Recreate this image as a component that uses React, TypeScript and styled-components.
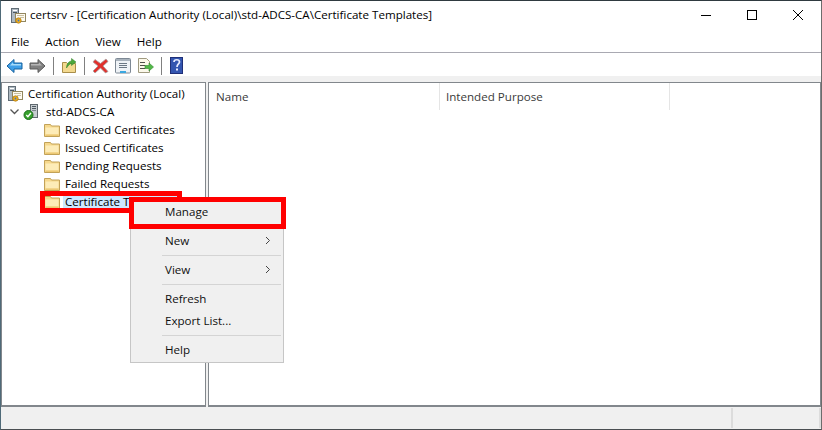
import styled, { createGlobalStyle } from 'styled-components'

const GlobalStyle = createGlobalStyle`
  html, body {
    margin: 0;
    padding: 0;
    background: #f0f0f0;
  }
  * {
    box-sizing: border-box;
  }
`

const CertIcon = () => (
  <svg width="16" height="16" viewBox="0 0 16 16">
    <rect x="1.500" y="0.500" width="7" height="14" fill="#aeb9c1" stroke="#616d76" />
    <rect x="3" y="2" width="4" height="1" fill="#fff" />
    <rect x="3" y="4" width="4" height="1" fill="#4d5860" />
    <rect x="5.500" y="5.500" width="10" height="8" fill="#fdfaf0" stroke="#93875f" />
    <rect x="7" y="7" width="7" height="1" fill="#c9bfa0" />
    <rect x="10" y="9" width="4" height="1" fill="#c9bfa0" />
    <circle cx="8.500" cy="12.500" r="2.700" fill="#eeae1c" stroke="#a87410" strokeWidth="0.700" />
    <circle cx="8.500" cy="12.500" r="0.900" fill="#3f76c8" />
  </svg>
)

const ServerIcon = () => (
  <svg width="17" height="16" viewBox="0 0 17 16">
    <rect x="7.500" y="0.500" width="7" height="13" fill="#c6ccd0" stroke="#5f686e" />
    <rect x="9" y="2" width="4" height="1" fill="#4d5860" />
    <rect x="9" y="4" width="4" height="1" fill="#4d5860" />
    <rect x="9" y="6" width="4" height="1" fill="#7d878e" />
    <circle cx="5.500" cy="11" r="4.500" fill="#36a02c" stroke="#1c6e1c" />
    <path d="M3.300 11l1.600 1.700L7.900 9" fill="none" stroke="#fff" strokeWidth="1.400" />
  </svg>
)

const FolderIcon = () => (
  <svg width="16" height="14" viewBox="0 0 16 14">
    <path d="M0.500 1.500h6l1 1.500h8v10.500h-15z" fill="#f6d88c" stroke="#c2a258" />
    <path d="M1.500 4.500h13v7h-13z" fill="#fdecb8" />
    <path d="M1.500 11.500h13v1.500h-13z" fill="#ecc874" />
  </svg>
)

const NavArrow = ({ $fill, $light, $edge, $flip }: { $fill: string; $light: string; $edge: string; $flip?: boolean }) => (
  <svg width="17" height="16" viewBox="0 0 17 16" style={$flip ? { transform: 'scaleX(-1)' } : undefined}>
    <path d="M1 8l7-6.500V5h8v6H8v3.500z" fill={$fill} stroke={$edge} strokeLinejoin="round" />
    <path d="M4 7.500l3-3V6h8v1.500z" fill={$light} />
  </svg>
)

const UpFolderIcon = () => (
  <svg width="16" height="17" viewBox="0 0 16 17">
    <path d="M1.500 5.500h4l1 1h8v9h-13z" fill="#f3d98f" stroke="#a98e4a" />
    <path d="M5.500 11C5.500 7 8 4 10.500 4V1.500L15 5l-4.500 3.500V6.500C8.500 6.500 7 9 5.500 11z" fill="#4da83c" stroke="#2f7f28" strokeWidth="0.500" />
  </svg>
)

const DeleteIcon = () => (
  <svg width="17" height="16" viewBox="0 0 17 16">
    <path d="M3 1.500l5.500 4L14 1l2 2.500L11 8l5 5.500-2.500 1.500L8.500 10 3 15 1 13l5-5-5-4z" fill="#e0302c" stroke="#a8a0a0" strokeWidth="0.800" />
  </svg>
)

const PropertiesIcon = () => (
  <svg width="16" height="16" viewBox="0 0 16 16">
    <rect x="0.500" y="0.500" width="15" height="14.500" rx="1" fill="#eef2f6" stroke="#7d8894" />
    <rect x="1" y="1" width="14" height="2" fill="#a8b2bc" />
    <rect x="4" y="5" width="8" height="1" fill="#6a7784" />
    <rect x="4" y="7" width="8" height="1" fill="#6a7784" />
    <rect x="4" y="9" width="8" height="1" fill="#6a7784" />
    <rect x="5" y="13" width="6" height="2" fill="#3aa7e0" />
  </svg>
)

const ExportIcon = () => (
  <svg width="17" height="16" viewBox="0 0 17 16">
    <path d="M1.500 0.500h8l3 3v11h-11z" fill="#fbf8ea" stroke="#a09a80" />
    <rect x="3" y="4" width="5" height="1" fill="#50504a" />
    <rect x="3" y="7" width="5" height="1" fill="#50504a" />
    <rect x="3" y="10" width="5" height="1" fill="#50504a" />
    <path d="M8 7.500h4V5l4.500 4-4.500 4v-2.500H8z" fill="#52b848" stroke="#2f8a2c" strokeWidth="0.600" />
  </svg>
)

const HelpIcon = () => (
  <svg width="13" height="17" viewBox="0 0 13 17">
    <rect x="0.500" y="0.500" width="12" height="16" fill="#3355b0" stroke="#1f2f78" />
    <path d="M4 5c0-3 5.500-3 5.500 0 0 2-2.500 2-2.500 5" fill="none" stroke="#e8ecff" strokeWidth="1.700" />
    <rect x="6" y="11.500" width="2" height="2" fill="#e8ecff" />
  </svg>
)

const WindowFrame = styled('div')`
  display: flex;
  flex-direction: column;
  position: relative;
  width: 822px;
  height: 430px;
  overflow: hidden;
  background: #f0f0f0;
  border-top: 1px solid #2f3a40;
  border-bottom: 1px solid #4a4f52;
  border-left: 1px solid #4f6a78;
  border-right: 1px solid #6c6c6c;
  font-family: 'Open Sans', 'Noto Sans', sans-serif;
  font-size: 11.6px;
  color: #000;
`

const TitleBar = styled('div')`
  display: flex;
  align-items: center;
  height: 29px;
  flex: none;
  background: #fff;
  padding-left: 9px;
`

const TitleText = styled('span')`
  margin: 0 0 2px 4px;
  flex: 1;
  white-space: nowrap;
`

const WindowButton = styled('div')`
  display: flex;
  align-items: center;
  justify-content: center;
  width: 46px;
  height: 29px;
  padding-bottom: 1px;
`

const MenuBar = styled('div')`
  display: flex;
  align-items: center;
  height: 23px;
  flex: none;
  background: #fff;
  padding-left: 2px;
  border-bottom: 1px solid #a9a9b2;
`

const MenuLabel = styled('span')`
  padding: 0 8px;
`

const ToolBar = styled('div')`
  display: flex;
  align-items: center;
  height: 23px;
  flex: none;
  background: #fff;
  padding: 2px 0 0 5px;
  gap: 6px;
`

const ToolDivider = styled('div')<{ $after?: number }>`
  width: 1px;
  height: 18px;
  background: #808080;
  margin: 0 ${(p) => p.$after ?? 1}px 0 1px;
`

const Strip = styled('div')`
  height: 6px;
  flex: none;
  background: #f0f0f0;
`

const Panes = styled('div')`
  display: flex;
  flex: 1;
  min-height: 0;
  gap: 2px;
`

const Pane = styled('div')<{ $width?: number }>`
  flex: ${(p) => (p.$width ? `0 0 ${p.$width}px` : '1')};
  background: #fff;
  border-top: 1px solid #82878c;
  border-left: 1px solid #82878c;
  border-right: 1px solid #82878c;
  border-bottom: 2px solid #82878c;
`

const Tree = styled('div')`
  display: flex;
  flex-direction: column;
  padding-top: 2px;
`

const TreeRow = styled('div')<{ $indent: number }>`
  display: flex;
  align-items: center;
  height: 18px;
  padding-left: ${(p) => p.$indent}px;
  white-space: nowrap;
`

const Chevron = styled('svg')`
  margin-right: 4px;
`

const TreeLabel = styled('span')<{ $selected?: boolean; $gap?: number }>`
  margin-left: ${(p) => p.$gap ?? 3}px;
  padding: 0 2px;
  line-height: 18px;
  background: ${(p) => (p.$selected ? '#cce8ff' : 'transparent')};
`

const ListHeader = styled('div')`
  display: flex;
  height: 27px;
`

const HeaderCell = styled('div')<{ $width: number; $inset: number }>`
  display: flex;
  align-items: center;
  width: ${(p) => p.$width}px;
  padding-left: ${(p) => p.$inset}px;
  border-right: 1px solid #e5e5e5;
  color: #3a3a3a;
`

const StatusBar = styled('div')`
  display: flex;
  justify-content: flex-end;
  height: 22px;
  flex: none;
  background: #f0f0f0;
  padding: 1px 0;
`

const StatusCell = styled('div')<{ $width: number }>`
  width: ${(p) => p.$width}px;
  border-left: 2px solid #dcdcdc;
`

const ContextMenu = styled('div')`
  position: absolute;
  left: 129px;
  top: 196px;
  width: 154px;
  display: flex;
  flex-direction: column;
  padding: 3px 2px 1px;
  background: #f0f0f0;
  border: 1px solid #c6c6c6;
`

const MenuItem = styled('div')`
  display: flex;
  align-items: center;
  justify-content: space-between;
  height: 22px;
  padding: 0 10px 1px 32px;
  color: #111;
`

const MenuSeparator = styled('div')`
  height: 1px;
  margin: 3px 0 3px 29px;
  background: #d4d4d4;
`

const Highlight = styled('div')<{ $x: number; $y: number; $w: number; $h: number }>`
  position: absolute;
  left: ${(p) => p.$x}px;
  top: ${(p) => p.$y}px;
  width: ${(p) => p.$w}px;
  height: ${(p) => p.$h}px;
  border: 5px solid #ff0000;
`

const folders = ['Revoked Certificates', 'Issued Certificates', 'Pending Requests', 'Failed Requests']

const Arrow = () => (
  <svg width="6" height="9" viewBox="0 0 6 9">
    <path d="M1 1l3.500 3.500L1 8" fill="none" stroke="#444" />
  </svg>
)

export default function App() {
  return (
    <>
      <GlobalStyle />
      <WindowFrame>
        <TitleBar>
          <CertIcon />
          <TitleText>certsrv - [Certification Authority (Local)\std-ADCS-CA\Certificate Templates]</TitleText>
          <WindowButton>
            <svg width="10" height="10" viewBox="0 0 10 10">
              <path d="M0 5.500h10" stroke="#000" />
            </svg>
          </WindowButton>
          <WindowButton>
            <svg width="10" height="10" viewBox="0 0 10 10">
              <rect x="0.500" y="0.500" width="9" height="9" fill="none" stroke="#000" />
            </svg>
          </WindowButton>
          <WindowButton>
            <svg width="10" height="10" viewBox="0 0 10 10">
              <path d="M0 0l10 10M10 0L0 10" stroke="#000" />
            </svg>
          </WindowButton>
        </TitleBar>
        <MenuBar>
          <MenuLabel>File</MenuLabel>
          <MenuLabel>Action</MenuLabel>
          <MenuLabel>View</MenuLabel>
          <MenuLabel>Help</MenuLabel>
        </MenuBar>
        <ToolBar>
          <NavArrow $fill="#3f9fe8" $light="#a8dcfa" $edge="#17629f" />
          <NavArrow $fill="#808080" $light="#b5b5b5" $edge="#5a5a5a" $flip />
          <ToolDivider />
          <UpFolderIcon />
          <ToolDivider />
          <DeleteIcon />
          <PropertiesIcon />
          <ExportIcon />
          <ToolDivider $after={2} />
          <HelpIcon />
        </ToolBar>
        <Strip />
        <Panes>
          <Pane $width={205}>
            <Tree>
              <TreeRow $indent={5}>
                <CertIcon />
                <TreeLabel>Certification Authority (Local)</TreeLabel>
              </TreeRow>
              <TreeRow $indent={8}>
                <Chevron width="9" height="6" viewBox="0 0 9 6">
                  <path d="M0.500 0.500l4 4 4-4" fill="none" stroke="#555" strokeWidth="1.300" />
                </Chevron>
                <ServerIcon />
                <TreeLabel $gap={4}>std-ADCS-CA</TreeLabel>
              </TreeRow>
              {folders.map((name) => (
                <TreeRow $indent={42} key={name}>
                  <FolderIcon />
                  <TreeLabel>{name}</TreeLabel>
                </TreeRow>
              ))}
              <TreeRow $indent={42}>
                <FolderIcon />
                <TreeLabel $selected>Certificate Templates</TreeLabel>
              </TreeRow>
            </Tree>
          </Pane>
          <Pane>
            <ListHeader>
              <HeaderCell $width={231} $inset={7}>Name</HeaderCell>
              <HeaderCell $width={230} $inset={6}>Intended Purpose</HeaderCell>
            </ListHeader>
          </Pane>
        </Panes>
        <StatusBar>
          <StatusCell $width={88} />
          <StatusCell $width={2} />
        </StatusBar>
        <Highlight $x={39} $y={190} $w={142} $h={22} />
        <ContextMenu>
          <MenuItem>Manage</MenuItem>
          <MenuSeparator />
          <MenuItem>
            New
            <Arrow />
          </MenuItem>
          <MenuSeparator />
          <MenuItem>
            View
            <Arrow />
          </MenuItem>
          <MenuSeparator />
          <MenuItem>Refresh</MenuItem>
          <MenuItem>Export List...</MenuItem>
          <MenuSeparator />
          <MenuItem>Help</MenuItem>
        </ContextMenu>
        <Highlight $x={128} $y={196} $w={157} $h={32} />
      </WindowFrame>
    </>
  )
}
